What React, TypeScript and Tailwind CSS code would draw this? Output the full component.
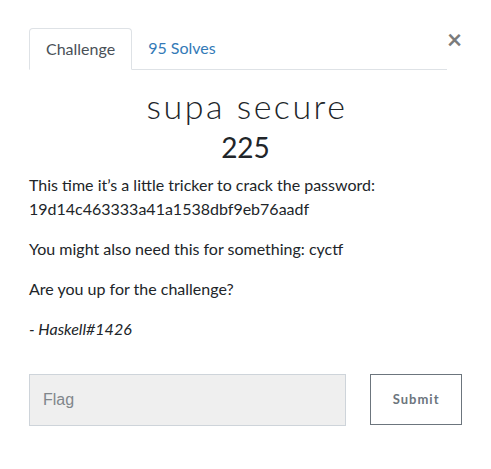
import React from "react";

export default function App() {
  return (
    <div className="w-[491px] h-[469px] bg-white font-['Lato',sans-serif] text-[#212529]">
      <div className="pl-[29px] pr-[29px] pt-[28px]">
        <div className="flex items-start">
          <div className="flex w-[420px] border-b border-[#dee2e6]">
            <div className="-mb-px px-4 py-2 text-base leading-6 text-[#495057] bg-white border border-[#dee2e6] border-b-white rounded-t">
              Challenge
            </div>
            <div className="px-4 py-2 text-base leading-6 text-[#337ab7]">95 Solves</div>
          </div>
          <button className="ml-auto mt-[-2px] text-[26px] leading-none font-bold text-[#7b7b7b]">
            ×
          </button>
        </div>

        <h3 className="mt-[16px] pl-[3px] text-center text-[34px] leading-[40px] font-light tracking-[2.5px] text-[#212529]">
          supa secure
        </h3>
        <h4 className="mt-[5px] text-center text-[28px] leading-[32px] font-normal text-[#212529]">225</h4>

        <div className="mt-[10px] text-base leading-6">
          <p>
            This time it’s a little tricker to crack the password:
            <br />
            19d14c463333a41a1538dbf9eb76aadf
          </p>
          <p className="mt-4">You might also need this for something: cyctf</p>
          <p className="mt-4">Are you up for the challenge?</p>
          <p className="mt-4 italic">- Haskell#1426</p>
        </div>

        <div className="mt-[33px] flex items-start">
          <input
            placeholder="Flag"
            className="w-[318px] h-[52px] px-[13px] bg-[#efefef] border border-[#ced4da] font-['Liberation_Sans',sans-serif] text-[16px] placeholder-[#80868b] outline-none"
          />
          <button className="ml-[24px] w-[92px] h-[51px] border border-[#6c757d] text-[13px] font-bold tracking-[1px] text-[#6c757d]">
            Submit
          </button>
        </div>
      </div>
    </div>
  );
}
